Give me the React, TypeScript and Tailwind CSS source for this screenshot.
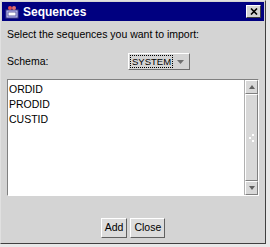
export default function App() {
  const items = ['ORDID', 'PRODID', 'CUSTID'];
  return (
    <div className="w-[270px] h-[247px] bg-[#e8e8e8] font-['Liberation_Sans',Arial,sans-serif]">
      <div className="w-[266px] h-[244px] flex flex-col bg-[#d4d4d4] border border-t-[#e0e0e0] border-l-[#e0e0e0] border-r-[#404040] border-b-[#404040] p-[1px]">
        {/* title bar */}
        <div className="h-[19px] bg-[#000080] flex items-center px-[3px] gap-[4px]">
          <svg width="14" height="14" viewBox="0 0 14 14">
            <rect x="1" y="5" width="12" height="8" fill="#c0c0ff" stroke="#404080" />
            <rect x="3" y="7" width="8" height="4" fill="#ffffff" stroke="#6060a0" />
            <circle cx="5" cy="3" r="2" fill="#e05050" />
            <circle cx="9" cy="3" r="2" fill="#e07070" />
          </svg>
          <span className="text-white font-bold text-[12px] leading-none flex-1">Sequences</span>
          <div className="w-[15px] h-[13px] bg-[#d4d4d4] border border-t-white border-l-white border-r-[#404040] border-b-[#404040] flex items-center justify-center">
            <svg width="8" height="7" viewBox="0 0 8 7">
              <path d="M1 0.5 L7 6.5 M7 0.5 L1 6.5" stroke="#000" strokeWidth="1.6" />
            </svg>
          </div>
        </div>
        {/* body */}
        <div className="flex-1 flex flex-col px-[5px]">
          <div className="text-[10.5px] text-black mt-[7px] leading-[13px]">Select the sequences you want to import:</div>
          <div className="flex items-center mt-[12px] h-[17px]">
            <span className="text-[10.5px] text-black w-[121px]">Schema:</span>
            <div className="w-[62px] h-[17px] border border-t-white border-l-white border-r-[#707070] border-b-[#707070] flex items-center pl-[1px] pr-[5px]">
              <div className="flex items-center border border-dotted border-black h-[13px] px-[1px] shrink-0">
                <span className="text-[9.5px] leading-none">SYSTEM</span>
              </div>
              <div className="flex-1" />
              <svg className="shrink-0" width="7" height="4" viewBox="0 0 7 4"><path d="M0 0 L7 0 L3.5 4 Z" fill="#707070" /></svg>
            </div>
          </div>
          <div className="mt-[9px] h-[117px] flex bg-white border border-t-[#808080] border-l-[#808080] border-r-white border-b-white">
            <div className="flex-1 flex flex-col pt-[2px] pl-[1px]">
              {items.map((it) => (
                <div key={it} className="text-[10.5px] leading-[15px] text-black">{it}</div>
              ))}
            </div>
            <div className="w-[14px] flex flex-col bg-[#c8c8c8] border-l border-[#b0b0b0]">
              <div className="h-[14px] bg-[#d8d8d8] border border-t-white border-l-white border-r-[#808080] border-b-[#808080] flex items-center justify-center">
                <svg width="6" height="4" viewBox="0 0 6 4"><path d="M3 0 L6 4 L0 4 Z" fill="#606060" /></svg>
              </div>
              <div className="flex-1 bg-[#d8d8d8] border border-t-white border-l-white border-r-[#808080] border-b-[#808080] flex items-center justify-center">
                <svg width="6" height="8" viewBox="0 0 6 8">
                  <rect x="3" y="0" width="2" height="2" fill="#ffffff" />
                  <rect x="0" y="3" width="2" height="2" fill="#ffffff" />
                  <rect x="3" y="6" width="2" height="2" fill="#ffffff" />
                </svg>
              </div>
              <div className="h-[14px] bg-[#d8d8d8] border border-t-white border-l-white border-r-[#808080] border-b-[#808080] flex items-center justify-center">
                <svg width="6" height="4" viewBox="0 0 6 4"><path d="M0 0 L6 0 L3 4 Z" fill="#606060" /></svg>
              </div>
            </div>
          </div>
          <div className="flex-1 flex items-end justify-center gap-[3px] pb-[4px]">
            <button className="h-[20px] px-[3px] text-[10.5px] bg-[#dcdcdc] border border-t-white border-l-white border-r-[#606060] border-b-[#606060]">Add</button>
            <button className="h-[20px] px-[3px] text-[10.5px] bg-[#dcdcdc] border border-t-white border-l-white border-r-[#606060] border-b-[#606060]">Close</button>
          </div>
        </div>
      </div>
    </div>
  );
}
